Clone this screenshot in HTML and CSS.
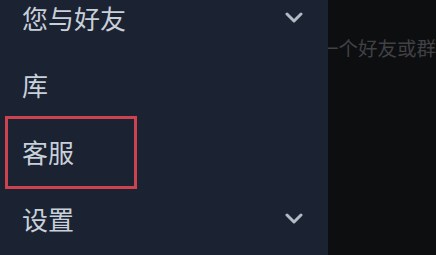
FILE: index.html
```html
<!DOCTYPE html>
<html lang="zh-CN">
<head>
  <meta charset="UTF-8" />
  <meta name="viewport" content="width=device-width, initial-scale=1" />
  <title>菜单</title>
  <link rel="stylesheet" href="styles.css">
</head>
<body>

<div class="layout">
  <nav class="sidebar">
    <div class="menu">
      <div class="item">
        <span>您与好友</span>
        <svg class="chev" viewBox="0 0 18 11" width="18" height="11"><path d="M2 2 L9 9 L16 2" /></svg>
      </div>
      <div class="item"><span>库</span></div>
      <div class="item">
        <span class="boxed">客服</span>
      </div>
      <div class="item">
        <span>设置</span>
        <svg class="chev" viewBox="0 0 18 11" width="18" height="11"><path d="M2 2 L9 9 L16 2" /></svg>
      </div>
    </div>
  </nav>
  <main class="panel">
    <p class="hint">选择一个好友或群组开始聊天</p>
  </main>
</div>

</body>
</html>
```

FILE: styles.css
```css
html, body {
  margin: 0;
  padding: 0;
  height: 100%;
  overflow: hidden;
  background: #0d0e10;
  font-family: "Noto Sans CJK SC", "Noto Sans", sans-serif;
}

.layout {
  display: flex;
  height: 100%;
}

.sidebar {
  width: 328px;
  flex-shrink: 0;
  background: #1b2232;
  overflow: hidden;
  position: relative;
  z-index: 1;
}

.menu {
  margin-top: -16px;
}

.item {
  height: 67px;
  display: flex;
  align-items: center;
  justify-content: space-between;
  padding: 0 25px 0 22px;
  font-size: 26px;
  color: #c8d0da;
}

.item span {
  line-height: 1;
}

.boxed {
  position: relative;
}

.boxed::before {
  content: "";
  position: absolute;
  left: -17px;
  top: -23px;
  width: 126px;
  height: 67px;
  border: 3px solid #cc424f;
}

.chev {
  display: block;
}

.chev path {
  fill: none;
  stroke: #b2bac6;
  stroke-width: 3;
  stroke-linecap: round;
  stroke-linejoin: round;
}

.panel {
  flex: 1;
  overflow: hidden;
  background: #0d0e10;
}

.hint {
  margin: 38px 0 0;
  white-space: nowrap;
  text-indent: -48px;
  font-size: 19.5px;
  line-height: 1;
  color: #404145;
}
```
